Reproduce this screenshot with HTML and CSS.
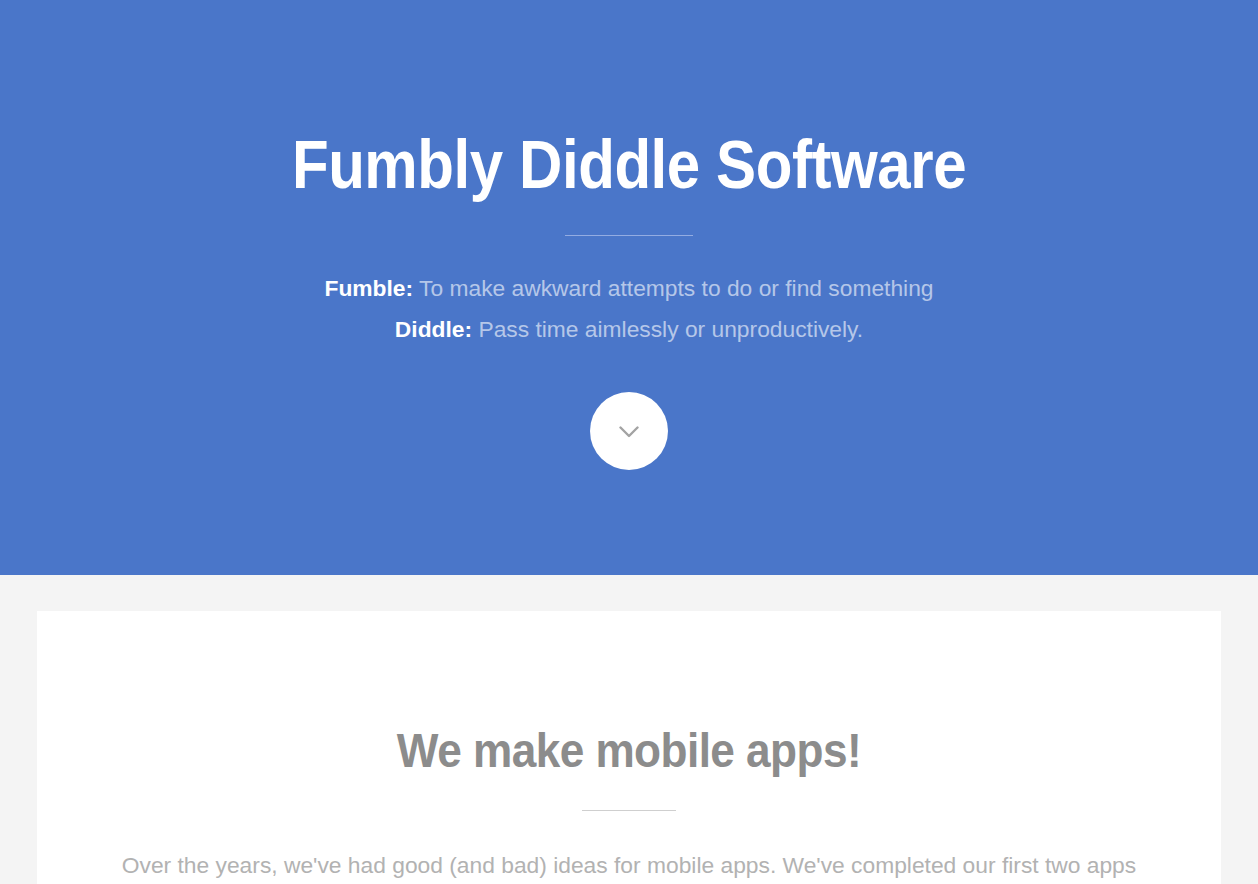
FILE: index.html
```html
<!DOCTYPE html>
<html lang="en">
<head>
<meta charset="utf-8">
<title>Fumbly Diddle Software</title>
<link rel="stylesheet" href="styles.css">
</head>
<body>
<header class="hero">
  <h1 class="hero-title">Fumbly Diddle Software</h1>
  <hr class="hero-rule">
  <p class="hero-def"><strong>Fumble:</strong> To make awkward attempts to do or find something</p>
  <p class="hero-def"><strong>Diddle:</strong> Pass time aimlessly or unproductively.</p>
  <a class="scroll-btn" href="#apps" aria-label="Scroll down">
    <svg width="20" height="12" viewBox="0 0 20 12" aria-hidden="true">
      <polyline points="1.5,1.5 10,10 18.5,1.5" fill="none" stroke="#a3a3a3" stroke-width="2.4" stroke-linecap="round" stroke-linejoin="round"/>
    </svg>
  </a>
</header>
<main class="content">
  <section class="card" id="apps">
    <h2 class="card-title">We make mobile apps!</h2>
    <hr class="card-rule">
    <p class="card-text">Over the years, we've had good (and bad) ideas for mobile apps. We've completed our first two apps and are working hard on the next ones.</p>
  </section>
</main>
</body>
</html>
```
FILE: styles.css
```css
html, body {
  margin: 0;
  padding: 0;
}
body {
  font-family: "Liberation Sans", Arial, Helvetica, sans-serif;
  background: #f4f4f4;
  overflow: hidden;
}
.hero {
  background: #4a76c9;
  height: 575px;
  box-sizing: border-box;
  padding-top: 124px;
  text-align: center;
  color: #fff;
}
.hero-title {
  margin: 0;
  font-size: 69px;
  line-height: 81.6px;
  font-weight: 700;
  letter-spacing: -0.5px;
  transform: scaleX(0.87);
  color: #fff;
}
.hero-rule {
  width: 128px;
  height: 1px;
  border: 0;
  background: #93ace2;
  margin: 29px auto 32px;
}
.hero-def {
  margin: 0;
  font-size: 22.8px;
  line-height: 41px;
  color: rgba(255, 255, 255, 0.6);
}
.hero-def strong {
  color: #fff;
  font-weight: 700;
}
.scroll-btn {
  display: flex;
  align-items: center;
  justify-content: center;
  width: 78px;
  height: 78px;
  margin: 42px auto 0;
  border-radius: 50%;
  background: #fff;
  padding-top: 3px;
  box-sizing: border-box;
}
.content {
  padding: 36px 37px 0;
}
.card {
  background: #fff;
  padding: 111px 40px 40px;
  text-align: center;
}
.card-title {
  margin: 0;
  font-size: 48px;
  line-height: 57.6px;
  font-weight: 700;
  letter-spacing: -0.6px;
  transform: scaleX(0.92);
  color: #8c8c8c;
}
.card-rule {
  width: 94px;
  height: 1px;
  border: 0;
  background: #cfcfcf;
  margin: 30px auto 36px;
}
.card-text {
  max-width: 1040px;
  margin: 0 auto;
  font-size: 22.8px;
  line-height: 36.5px;
  color: #b2b2b2;
}
```
